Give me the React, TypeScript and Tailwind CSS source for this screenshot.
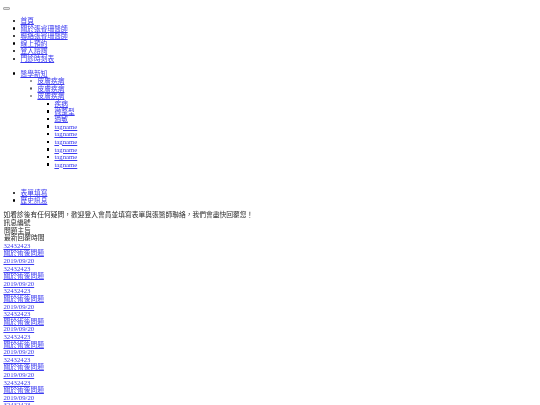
const mainLinks = ['首頁', '關於張睿珊醫師', '聯絡張睿珊醫師', '線上預約', '登入諮詢', '門診時刻表']
const skinLinks = ['疾病', '微整型', '過敏', 'tagname', 'tagname', 'tagname', 'tagname', 'tagname', 'tagname']
const rows = Array.from({ length: 8 }, (_, i) => i)

const markers = {
  disc: 'before:rounded-full before:bg-black',
  circle: 'before:rounded-full before:border-[0.6px] before:border-[#555]',
  square: 'before:bg-black',
}

function A({ children }: { children: React.ReactNode }) {
  return (
    <a href="#" className="text-[#3a3af0] underline decoration-[0.5px]">
      {children}
    </a>
  )
}

function Item({ kind = 'disc', children }: { kind?: keyof typeof markers; children: React.ReactNode }) {
  return (
    <li
      className={`relative before:absolute before:top-[2.6px] before:left-[-7.6px] before:size-[2.5px] before:content-[''] ${markers[kind]}`}
    >
      {children}
    </li>
  )
}

export default function App() {
  return (
    <div className="h-[405px] overflow-hidden bg-white px-[3.4px] pt-[7px] font-['Liberation_Serif','Noto_Sans_CJK_TC',serif] text-[6.75px] leading-[7.6px] text-[#2a2a2a] blur-[0.4px]">
      <button className="block h-[3px] w-[7px] rounded-[1px] border-[0.5px] border-[#aaa] bg-[#e4e4e4]" />

      <ul className="mt-[7px] list-none pl-[17px]">
        {mainLinks.map((link) => (
          <Item key={link}>
            <A>{link}</A>
          </Item>
        ))}
      </ul>

      <ul className="mt-[7px] list-none pl-[17px]">
        <Item>
          <A>醫學新知</A>
          <ul className="list-none pl-[17px]">
            <Item kind="circle">
              <A>皮膚疾病</A>
            </Item>
            <Item kind="circle">
              <A>皮膚疾病</A>
            </Item>
            <Item kind="circle">
              <A>皮膚疾病</A>
              <ul className="list-none pl-[17px]">
                {skinLinks.map((link, i) => (
                  <Item key={i} kind="square">
                    <A>{link}</A>
                  </Item>
                ))}
              </ul>
            </Item>
          </ul>
        </Item>
      </ul>

      <ul className="mt-[21px] list-none pl-[17px]">
        <Item>
          <A>表單填寫</A>
        </Item>
        <Item>
          <A>歷史訊息</A>
        </Item>
      </ul>

      <p className="mt-[7px]">如看診後有任何疑問，歡迎登入會員並填寫表單與張醫師聯絡，我們會盡快回覆您！</p>
      <div>訊息編號</div>
      <div className="pl-[0.5px]">問題主旨</div>
      <div className="pl-[0.5px]">最新回覆時間</div>

      {rows.map((i) => (
        <div key={i}>
          <div>
            <A>32432423</A>
          </div>
          <div>
            <A>關於術後問題</A>
          </div>
          <div>
            <A>2019/09/20</A>
          </div>
        </div>
      ))}
    </div>
  )
}
